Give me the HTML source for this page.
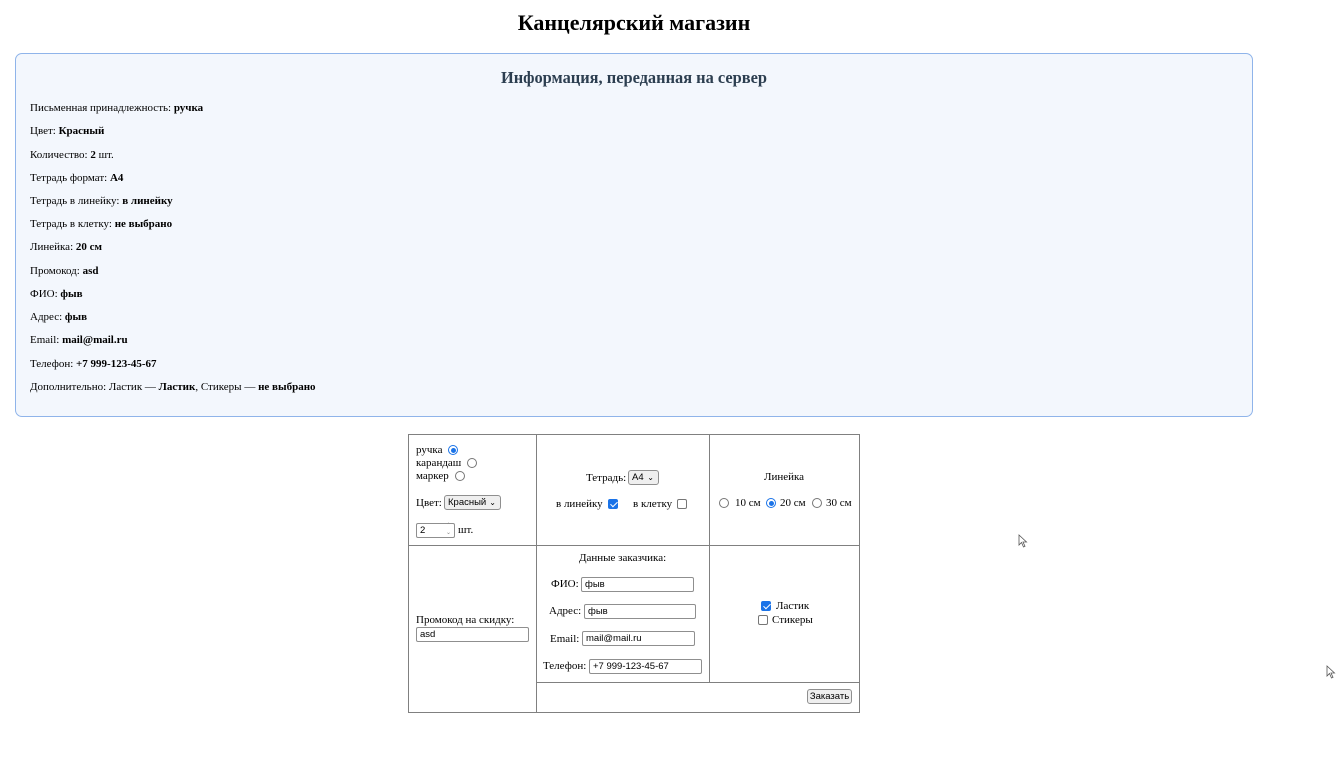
<!DOCTYPE html>
<html><head><meta charset="utf-8">
<style>
*{box-sizing:border-box}
body{margin:0;width:1336px;height:759px;background:#fff;font-family:"Liberation Serif",serif;color:#000;position:relative;overflow:hidden}
.a{position:absolute;white-space:nowrap}
h1{position:absolute;left:0;width:1268px;top:10px;margin:0;text-align:center;font-size:22px;font-weight:bold}
.box{position:absolute;left:15px;top:53px;width:1238px;height:364px;background:#f3f7fd;border:1px solid #8fb4ea;border-radius:7px}
.ln{position:absolute;left:30px;font-size:11px}
.tb{position:absolute;border:1px solid #808080}
.t{font-size:11px}
.rad{position:absolute;width:10px;height:10px;border:1px solid #767676;border-radius:50%;background:#fff}
.rad.on{border:1px solid #1a73e8}
.rad.on::after{content:"";position:absolute;left:1.5px;top:1.5px;width:5px;height:5px;border-radius:50%;background:#1a73e8}
.cb{position:absolute;width:10px;height:10px;border:1px solid #767676;border-radius:2px;background:#fff}
.cb.on{background:#1a73e8;border-color:#1a73e8}
.cb.on::after{content:"";position:absolute;left:2.5px;top:0px;width:3px;height:6px;border:solid #fff;border-width:0 1.5px 1.5px 0;transform:rotate(45deg)}
.inp{position:absolute;border:1px solid #8f8f8f;border-radius:2px;background:#fff;font-family:"Liberation Sans",sans-serif;font-size:9.5px;padding-left:3px;line-height:13px;height:15px}
.sel{position:absolute;border:1px solid #8f8f8f;border-radius:3px;background:#efefef;font-family:"Liberation Sans",sans-serif;font-size:9.5px;padding-left:3px;line-height:13px;height:15px}
</style></head><body>
<h1>Канцелярский магазин</h1>
<div class="box"></div>
<div class="a" style="left:15px;width:1238px;top:68px;text-align:center;font-size:16.4px;font-weight:bold;color:#2c3e50">Информация, переданная на сервер</div>
<div class="ln a" style="top:102px">Письменная принадлежность: <b>ручка</b></div>
<div class="ln a" style="top:125px">Цвет: <b>Красный</b></div>
<div class="ln a" style="top:149px">Количество: <b>2</b> шт.</div>
<div class="ln a" style="top:172px">Тетрадь формат: <b>A4</b></div>
<div class="ln a" style="top:195px">Тетрадь в линейку: <b>в линейку</b></div>
<div class="ln a" style="top:218px">Тетрадь в клетку: <b>не выбрано</b></div>
<div class="ln a" style="top:241px">Линейка: <b>20 см</b></div>
<div class="ln a" style="top:265px">Промокод: <b>asd</b></div>
<div class="ln a" style="top:288px">ФИО: <b>фыв</b></div>
<div class="ln a" style="top:311px">Адрес: <b>фыв</b></div>
<div class="ln a" style="top:334px">Email: <b>mail@mail.ru</b></div>
<div class="ln a" style="top:358px">Телефон: <b>+7 999-123-45-67</b></div>
<div class="ln a" style="top:381px">Дополнительно: Ластик — <b>Ластик</b>, Стикеры — <b>не выбрано</b></div>

<div class="tb" style="left:408px;top:434px;width:452px;height:279px"></div>
<div class="a" style="left:408px;top:545px;width:452px;height:1px;background:#808080"></div>
<div class="a" style="left:536px;top:682px;width:324px;height:1px;background:#808080"></div>
<div class="a" style="left:536px;top:434px;width:1px;height:279px;background:#808080"></div>
<div class="a" style="left:709px;top:434px;width:1px;height:248px;background:#808080"></div>

<div class="a t" style="left:416px;top:444px">ручка</div><div class="rad on" style="left:448px;top:445px"></div>
<div class="a t" style="left:416px;top:457px">карандаш</div><div class="rad" style="left:467px;top:458px"></div>
<div class="a t" style="left:416px;top:470px">маркер</div><div class="rad" style="left:455px;top:471px"></div>
<div class="a t" style="left:416px;top:497px">Цвет:</div>
<div class="sel" style="left:444px;top:495px;width:57px">Красный <span style="position:absolute;right:4px;font-size:8px">⌄</span></div>
<div class="inp" style="left:416px;top:523px;width:39px">2<span style="position:absolute;right:3px;top:-1px;font-size:6px;color:#888;line-height:7px">⌃<br>⌄</span></div>
<div class="a t" style="left:458px;top:524px">шт.</div>

<div class="a t" style="left:586px;top:472px">Тетрадь:</div>
<div class="sel" style="left:628px;top:470px;width:31px">A4 <span style="position:absolute;right:4px;font-size:8px">⌄</span></div>
<div class="a t" style="left:556px;top:498px">в линейку</div><div class="cb on" style="left:608px;top:499px"></div>
<div class="a t" style="left:633px;top:498px">в клетку</div><div class="cb" style="left:677px;top:499px"></div>

<div class="a t" style="left:764px;top:471px">Линейка</div>
<div class="rad" style="left:719px;top:498px"></div><div class="a t" style="left:735px;top:497px">10 см</div>
<div class="rad on" style="left:766px;top:498px"></div><div class="a t" style="left:780px;top:497px">20 см</div>
<div class="rad" style="left:812px;top:498px"></div><div class="a t" style="left:826px;top:497px">30 см</div>

<div class="a t" style="left:416px;top:614px">Промокод на скидку:</div>
<div class="inp" style="left:416px;top:627px;width:113px">asd</div>

<div class="a t" style="left:579px;top:552px">Данные заказчика:</div>
<div class="a t" style="left:551px;top:578px">ФИО:</div><div class="inp" style="left:581px;top:577px;width:113px">фыв</div>
<div class="a t" style="left:549px;top:605px">Адрес:</div><div class="inp" style="left:584px;top:604px;width:112px">фыв</div>
<div class="a t" style="left:550px;top:633px">Email:</div><div class="inp" style="left:582px;top:631px;width:113px">mail@mail.ru</div>
<div class="a t" style="left:543px;top:660px">Телефон:</div><div class="inp" style="left:589px;top:659px;width:113px">+7 999-123-45-67</div>

<div class="cb on" style="left:761px;top:601px"></div><div class="a t" style="left:776px;top:600px">Ластик</div>
<div class="cb" style="left:758px;top:615px"></div><div class="a t" style="left:772px;top:614px">Стикеры</div>

<div class="a" style="left:807px;top:689px;width:45px;height:15px;border:1px solid #8f8f8f;border-radius:3px;background:#efefef;font-family:'Liberation Sans',sans-serif;font-size:9.5px;text-align:center;line-height:13px">Заказать</div>

<svg class="a" style="left:1018px;top:534px" width="10" height="14" viewBox="0 0 10 14"><path d="M1 1 L1 11 L3.5 8.5 L5.5 13 L7 12.3 L5 8 L8.5 8 Z" fill="#fff" stroke="#555" stroke-width="0.8"/></svg>
<svg class="a" style="left:1326px;top:665px" width="10" height="14" viewBox="0 0 10 14"><path d="M1 1 L1 11 L3.5 8.5 L5.5 13 L7 12.3 L5 8 L8.5 8 Z" fill="#fff" stroke="#555" stroke-width="0.8"/></svg>
</body></html>
